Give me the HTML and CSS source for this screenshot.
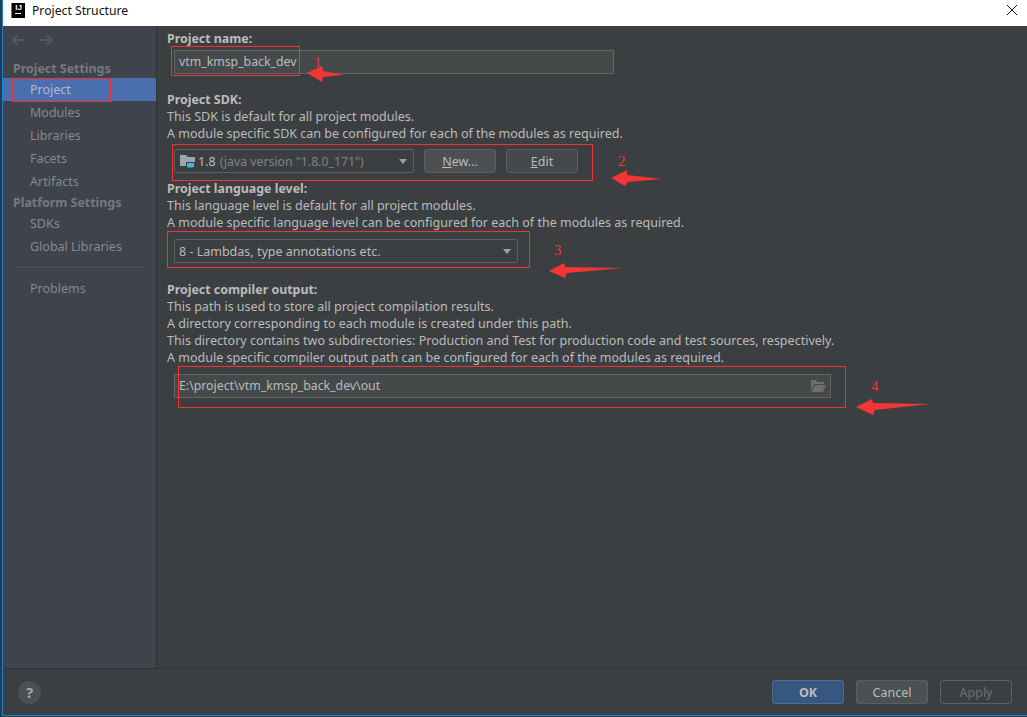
FILE: index.html
```html
<!DOCTYPE html>
<html lang="en">
<head>
<meta charset="utf-8">
<title>Project Structure</title>
<link rel="stylesheet" href="styles.css">
</head>
<body>
<div class="window">
  <header class="titlebar">
    <div class="app-icon"><span class="app-ij">IJ</span><span class="app-bar"></span></div>
    <span class="title">Project Structure</span>
    <svg class="close" width="12" height="12" viewBox="0 0 12 12"><path d="M1 1l10 10M11 1L1 11" stroke="#111" stroke-width="1" fill="none"/></svg>
  </header>
  <div class="main">
    <nav class="sidebar">
      <div class="nav-arrows">
        <svg width="16" height="12" viewBox="0 0 16 12"><path d="M14 6H2M7 1L2 6l5 5" stroke="#53575b" stroke-width="2" fill="none"/></svg>
        <svg width="16" height="12" viewBox="0 0 16 12"><path d="M2 6h12M9 1l5 5-5 5" stroke="#53575b" stroke-width="2" fill="none"/></svg>
      </div>
      <div class="nav-head">Project Settings</div>
      <div class="nav-item selected">Project</div>
      <div class="nav-item">Modules</div>
      <div class="nav-item">Libraries</div>
      <div class="nav-item">Facets</div>
      <div class="nav-item">Artifacts</div>
      <div class="nav-head nav-head-tight">Platform Settings</div>
      <div class="nav-item">SDKs</div>
      <div class="nav-item">Global Libraries</div>
      <div class="nav-sep"></div>
      <div class="nav-item">Problems</div>
    </nav>
    <section class="content">
      <h2 class="label">Project name:</h2>
      <div class="field field-name">vtm_kmsp_back_dev</div>

      <h2 class="label label-sdk">Project SDK:</h2>
      <p class="line">This SDK is default for all project modules.</p>
      <p class="line">A module specific SDK can be configured for each of the modules as required.</p>
      <div class="row row-sdk">
        <div class="combo combo-sdk">
          <svg class="sdk-icon" width="16" height="14" viewBox="0 0 16 14">
            <path d="M0 1h6l2 2h7v9H0z" fill="#9aa7b0"/>
            <path d="M6 8h9v3.5a2 2 0 0 1-2 2H8a2 2 0 0 1-2-2z" fill="#3c3f41"/>
            <path d="M7 9h7v3a1.500 1.500 0 0 1-1.500 1.500h-4A1.500 1.500 0 0 1 7 12z" fill="#40b6e0"/>
          </svg>
          <span class="sdk-name">1.8</span><span class="sdk-ver">(java version "1.8.0_171")</span>
          <span class="caret"></span>
        </div>
        <button class="btn btn-new"><u>N</u>ew...</button>
        <button class="btn btn-edit"><u>E</u>dit</button>
      </div>

      <h2 class="label label-lang">Project language level:</h2>
      <p class="line">This language level is default for all project modules.</p>
      <p class="line">A module specific language level can be configured for each of the modules as required.</p>
      <div class="row row-lang">
        <div class="combo combo-lang"><span>8 - Lambdas, type annotations etc.</span><span class="caret"></span></div>
      </div>

      <h2 class="label label-out">Project compiler output:</h2>
      <p class="line">This path is used to store all project compilation results.</p>
      <p class="line">A directory corresponding to each module is created under this path.</p>
      <p class="line">This directory contains two subdirectories: Production and Test for production code and test sources, respectively.</p>
      <p class="line">A module specific compiler output path can be configured for each of the modules as required.</p>
      <div class="field field-out">
        <span>E:\project\vtm_kmsp_back_dev\out</span>
        <svg width="15" height="12" viewBox="0 0 15 12"><path d="M0 0h5l1.500 2H13v2H3L0 11z" fill="#6e6e6e"/><path d="M3.500 5H15l-3 7H0.500z" fill="#6e6e6e"/></svg>
      </div>
    </section>
  </div>
  <footer class="footer">
    <div class="help">?</div>
    <div class="actions">
      <button class="btn btn-ok">OK</button>
      <button class="btn">Cancel</button>
      <button class="btn btn-off">Apply</button>
    </div>
  </footer>
</div>
<svg class="marks" width="1027" height="717" viewBox="0 0 1027 717">
  <g class="mark-boxes">
    <rect x="171.500" y="46.500" width="128" height="29"/>
    <rect x="12.500" y="78.500" width="98" height="23"/>
    <rect x="172.500" y="144.500" width="420" height="36"/>
    <rect x="167.500" y="231.500" width="362" height="36"/>
    <rect x="178.500" y="366.500" width="667" height="41"/>
  </g>
  <g class="mark-arrows">
    <polygon points="307,73 322,66 323,71 344,75 323,77 322,82"/>
    <polygon points="611,178 627,170 627,175 662,179 628,182 625,186"/>
    <polygon points="549,271 564,263 565,267 624,268 567,273 565,278"/>
    <polygon points="856,407 872,399 873,403 930,404 875,410 873,415"/>
  </g>
  <g class="mark-nums">
    <text x="314" y="67">1</text>
    <text x="618" y="166">2</text>
    <text x="554" y="255">3</text>
    <text x="871" y="391">4</text>
  </g>
</svg>
</body>
</html>
```
FILE: styles.css
```css
* { box-sizing: border-box; }
html, body { margin: 0; padding: 0; height: 717px; overflow: hidden; }
body {
  background: #2a3a4a;
  font-family: "Noto Sans", "Open Sans", sans-serif;
  font-size: 12.5px;
  color: #bbbbbb;
  padding: 0 0 1px 2px;
}
.window {
  height: 716px;
  display: flex;
  flex-direction: column;
  border-left: 1px solid #1884d8;
  border-bottom: 1px solid #1884d8;
  background: #3c3f41;
}
.titlebar {
  height: 26px;
  flex: none;
  background: #fff;
  display: flex;
  align-items: center;
  padding: 0 9px 6px 8px;
  color: #111;
}
.app-icon {
  width: 14px;
  height: 15px;
  background: #000;
  color: #fff;
  border-left: 1px solid #2f8fd8;
  margin-right: 7px;
  font: bold 8px/9px "Liberation Sans", sans-serif;
  text-align: center;
}
.app-ij { display: block; }
.app-bar { display: block; width: 6px; height: 1px; margin: 1px 0 0 3px; background: #fff; }
.title { flex: 1; font-size: 12.2px; }
.close { flex: none; }
.main { flex: 1; display: flex; min-height: 0; border-bottom: 1px solid #323232; }
.sidebar {
  width: 154px;
  flex: none;
  background: #3e434c;
  border-right: 1px solid #323232;
  color: #868a8d;
}
.nav-arrows { height: 31px; padding: 8px 0 0 8px; display: flex; gap: 11px; }
.nav-head { height: 21px; line-height: 23px; padding-left: 10px; font-weight: 700; font-size: 12.4px; color: #767a7d; }
.nav-head-tight { height: 19px; line-height: 19px; }
.nav-item { height: 23px; line-height: 23px; padding-left: 27px; }
.nav-item.selected { background: #4b6eaf; color: #b4bac4; }
.nav-sep { height: 1px; background: #4a4d50; margin: 9px 7px 9px 12px; }
.content { flex: 1; padding: 4px 0 0 10px; min-width: 0; }
.label { margin: 0; font-size: 12.4px; line-height: 17px; font-weight: 700; color: #bbbbbb; }
.line { margin: 0; font-size: 12.52px; line-height: 17px; white-space: nowrap; }
.label-sdk { margin-top: 17px; }
.label-lang { margin-top: 7px; }
.label-out { margin-top: 18px; }
.field {
  height: 24px;
  margin: 3px 0 0 7px;
  background: #45494a;
  border: 1px solid #646464;
  font-size: 12.3px;
  line-height: 22px;
  padding-left: 4px;
  display: flex;
  align-items: center;
  justify-content: space-between;
}
.field-name { width: 440px; }
.field-out { width: 657px; margin-top: 8px; padding-right: 4px; }
.row { display: flex; margin-left: 7px; gap: 10px; height: 24px; }
.row-sdk { margin-top: 7px; }
.row-lang { margin-top: 8px; }
.combo {
  height: 24px;
  background: #3c3f41;
  border: 1px solid #5e6060;
  border-radius: 2px;
  display: flex;
  align-items: center;
  padding: 0 5px 0 4px;
}
.combo-sdk { width: 240px; padding-left: 5px; }
.combo-lang { width: 344px; }
.sdk-icon { margin-right: 2px; flex: none; }
.sdk-name { margin-right: 4px; }
.sdk-ver { color: #7f8284; white-space: nowrap; font-size: 12.3px; }
.caret {
  margin-left: auto;
  width: 0;
  height: 0;
  border-left: 4.500px solid transparent;
  border-right: 4.500px solid transparent;
  border-top: 5px solid #a0a0a0;
  flex: none;
  margin-right: 1px;
}
.btn {
  width: 72px;
  height: 24px;
  padding: 0;
  background: #4c5052;
  border: 1px solid #5e6060;
  border-radius: 3px;
  color: #bbbbbb;
  font: inherit;
}
.btn-edit { background: #45494b; }
.footer {
  flex: none;
  height: 46px;
  display: flex;
  align-items: center;
  justify-content: space-between;
  padding: 0 15px 0 15px;
}
.help {
  width: 23px;
  height: 23px;
  border-radius: 50%;
  background: #4c5052;
  color: #a6a8a9;
  font-weight: 700;
  font-size: 15px;
  line-height: 23px;
  text-align: center;
}
.actions { display: flex; gap: 12px; }
.btn-ok { background: #365880; border-color: #4c708c; font-weight: 700; }
.btn-off { background: #3c3f41; color: #6e7072; }
.marks { position: absolute; left: 0; top: 0; pointer-events: none; }
.mark-boxes rect { fill: none; stroke: #f03333; stroke-width: 1; }
.mark-arrows polygon { fill: #f23535; }
.mark-nums text { fill: #e83838; font-family: "Liberation Serif", serif; font-size: 15px; }
```
